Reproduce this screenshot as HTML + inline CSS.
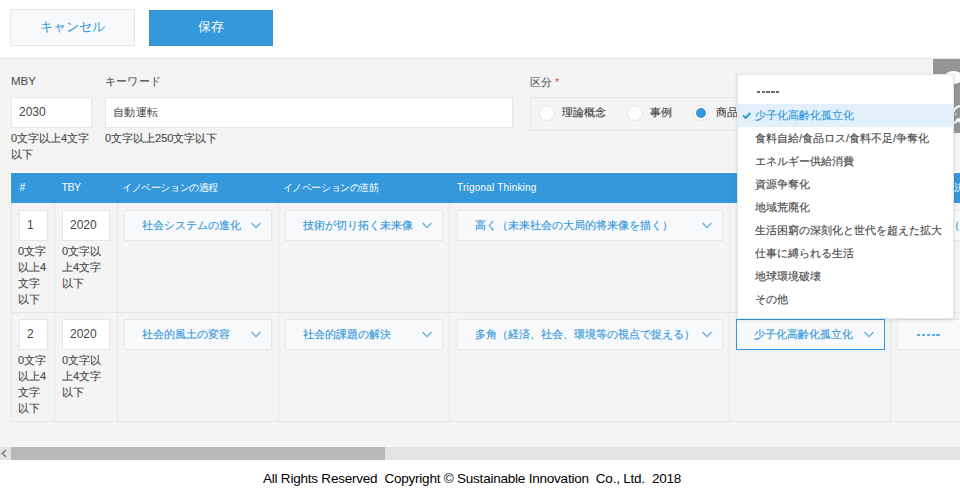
<!DOCTYPE html>
<html><head><meta charset="utf-8">
<style>
*{box-sizing:border-box;margin:0;padding:0}
html,body{width:960px;height:495px;overflow:hidden;background:#fff;font-family:"Liberation Sans",sans-serif;color:#333}
.dd,.sel,.help,.rl{-webkit-text-stroke:0.15px currentColor}
.abs{position:absolute}
.btn{position:absolute;top:9px;height:37px;font-size:12.5px;text-align:center;line-height:35px}
.cancel{left:10px;width:125px;background:#f7f9fa;border:1px solid #e3e7e8;color:#3498db}
.save{left:149px;width:123.5px;top:10px;height:35.5px;line-height:33.5px;background:#3498db;border:1px solid #3192d6;color:#fff}
.grey{position:absolute;left:0;top:58px;width:960px;height:389px;background:#f4f4f4;border-top:1px solid #e3e7e8}
.lbl{position:absolute;font-size:11px;color:#4a4a4a}
.inp{position:absolute;background:#fff;border:1px solid #e3e7e8;font-size:12px;color:#444;padding-left:7px}
.help{position:absolute;font-size:11px;line-height:16px;color:#4a4a4a}
.thead{position:absolute;left:11px;top:173px;width:949px;height:30px;background:#3498db;box-shadow:-1px -1px 0 #fff;color:#fff;font-size:9.5px;line-height:30px}
.thead span{position:absolute;top:0;white-space:nowrap}
.vl{position:absolute;top:203px;height:219px;width:1px;background:#e3e7e8}
.hl{position:absolute;left:11px;width:949px;height:1px;background:#e3e7e8}
.sel{position:absolute;height:31px;background:#f7f9fa;border:1px solid #e3e7e8;color:#3498db;font-size:11px;line-height:29px;padding-left:17px;white-space:nowrap;overflow:hidden}
.sel svg{position:absolute;right:10px;top:11px}
.dd{position:absolute;left:737px;top:74px;width:217px;height:245px;background:#fff;border:1px solid #e3e7e8;box-shadow:0 1px 4px rgba(0,0,0,.12);font-size:11px;color:#4a4a4a}
.dd div{position:absolute;left:0;width:215px;height:23px;line-height:23px;padding-left:17px;white-space:nowrap}
.dd .on{background:#e1f0fb;color:#3498db}
.radio{position:absolute;top:105px;width:16px;height:16px;border-radius:50%;background:#fff;border:1px solid #e6e6e6}
.rl{position:absolute;top:104px;font-size:11px;line-height:16px;color:#444}
.foot{position:absolute;left:263px;top:470.5px;white-space:nowrap;font-size:13.5px;letter-spacing:-0.22px;color:#000}
</style></head><body>
<div class="btn cancel">キャンセル</div>
<div class="btn save">保存</div>
<div class="grey"></div>

<div class="lbl" style="left:11px;top:74.5px;font-size:11.5px">MBY</div>
<div class="lbl" style="left:104.5px;top:74px;font-size:11px;letter-spacing:0.35px">キーワード</div>
<div class="lbl" style="left:530px;top:75px">区分 <span style="color:#e74c3c">*</span></div>

<div class="inp" style="left:11px;top:97px;width:81px;height:31px;line-height:29px">2030</div>
<div class="inp" style="left:105px;top:97px;width:408px;height:31px;line-height:29px"><span style="font-size:11px;letter-spacing:0.3px">自動運転</span></div>
<div class="help" style="left:11px;top:130px">0文字以上4文字<br>以下</div>
<div class="help" style="left:105px;top:130px">0文字以上250文字以下</div>

<div class="abs" style="left:530px;top:97px;width:260px;height:34px;border:1px solid #e3e7e8;background:#f4f4f4"></div>
<div class="radio" style="left:539px"></div><div class="rl" style="left:562px">理論概念</div>
<div class="radio" style="left:627px"></div><div class="rl" style="left:650px">事例</div>
<div class="radio" style="left:693px"><div style="position:absolute;left:2px;top:2px;width:10px;height:10px;border-radius:50%;background:#3498db"></div></div><div class="rl" style="left:716px">商品</div>

<div class="abs" style="left:932px;top:59px;width:28px;height:74px;background:#959595;border-left:1px solid #fff"></div>
<div class="abs" style="left:944px;top:71px;width:19px;height:13px;border-radius:50%;background:#fff"></div>
<svg class="abs" style="left:933px;top:98px" width="27" height="32" viewBox="0 0 27 32"><path d="M20.5 14 Q22 9 27 8" fill="none" stroke="#fff" stroke-width="2"/><path d="M22 17 L23 15.5" fill="none" stroke="#fff" stroke-width="1.2"/><path d="M21 25.5 L26 21" fill="none" stroke="#fff" stroke-width="2"/><path d="M22.5 21 L27 20 L27 25 Z" fill="#fff"/></svg>

<div class="thead">
<span style="left:8.5px;top:-1px;font-size:10.5px">#</span>
<span style="left:50.5px;top:-1px;font-size:10.5px;letter-spacing:-0.4px">TBY</span>
<span style="left:111px;letter-spacing:-0.4px">イノベーションの過程</span>
<span style="left:271.5px;letter-spacing:-0.4px">イノベーションの道筋</span>
<span style="left:446px;font-size:10px;letter-spacing:0.2px">Trigonal Thinking</span>
<span style="left:942.5px">決</span>
</div>

<div class="vl" style="left:11px"></div>
<div class="vl" style="left:54px"></div>
<div class="vl" style="left:117px"></div>
<div class="vl" style="left:278px"></div>
<div class="vl" style="left:449px"></div>
<div class="vl" style="left:729px"></div>
<div class="vl" style="left:890px"></div>
<div class="hl" style="top:312px"></div>
<div class="hl" style="top:421px"></div>

<!-- row 1 -->
<div class="inp" style="left:19px;top:210px;width:29px;height:31px;line-height:29px;padding-left:7px">1</div>
<div class="inp" style="left:62px;top:210px;width:48px;height:31px;line-height:29px;padding-left:7px">2020</div>
<div class="help" style="left:18px;top:243px">0文字<br>以上4<br>文字<br>以下</div>
<div class="help" style="left:62px;top:243px">0文字以<br>上4文字<br>以下</div>
<div class="sel" style="left:124px;top:210px;width:148px">社会システムの進化<svg width="10" height="7" viewBox="0 0 10 7"><path d="M0.6 1L5 5.6L9.4 1" fill="none" stroke="#5aaae2" stroke-width="1.2"/></svg></div>
<div class="sel" style="left:285px;top:210px;width:158px">技術が切り拓く未来像<svg width="10" height="7" viewBox="0 0 10 7"><path d="M0.6 1L5 5.6L9.4 1" fill="none" stroke="#5aaae2" stroke-width="1.2"/></svg></div>
<div class="sel" style="left:457px;top:210px;width:266px">高く（未来社会の大局的将来像を描く）<svg width="10" height="7" viewBox="0 0 10 7"><path d="M0.6 1L5 5.6L9.4 1" fill="none" stroke="#5aaae2" stroke-width="1.2"/></svg></div>
<div class="sel" style="left:897px;top:210px;width:148px;padding-left:29px">高く（未来</div>

<!-- row 2 -->
<div class="inp" style="left:19px;top:319px;width:29px;height:31px;line-height:29px;padding-left:7px">2</div>
<div class="inp" style="left:62px;top:319px;width:48px;height:31px;line-height:29px;padding-left:7px">2020</div>
<div class="help" style="left:18px;top:352px">0文字<br>以上4<br>文字<br>以下</div>
<div class="help" style="left:62px;top:352px">0文字以<br>上4文字<br>以下</div>
<div class="sel" style="left:124px;top:319px;width:148px">社会的風土の変容<svg width="10" height="7" viewBox="0 0 10 7"><path d="M0.6 1L5 5.6L9.4 1" fill="none" stroke="#5aaae2" stroke-width="1.2"/></svg></div>
<div class="sel" style="left:285px;top:319px;width:158px">社会的課題の解決<svg width="10" height="7" viewBox="0 0 10 7"><path d="M0.6 1L5 5.6L9.4 1" fill="none" stroke="#5aaae2" stroke-width="1.2"/></svg></div>
<div class="sel" style="left:457px;top:319px;width:266px">多角（経済、社会、環境等の視点で捉える）<svg width="10" height="7" viewBox="0 0 10 7"><path d="M0.6 1L5 5.6L9.4 1" fill="none" stroke="#5aaae2" stroke-width="1.2"/></svg></div>
<div class="sel" style="left:736px;top:319px;width:149px;border-color:#3498db">少子化高齢化孤立化<svg width="10" height="7" viewBox="0 0 10 7"><path d="M0.6 1L5 5.6L9.4 1" fill="none" stroke="#5aaae2" stroke-width="1.2"/></svg></div>
<div class="sel" style="left:897px;top:319px;width:148px"></div>
<div class="abs" style="left:917px;top:334px;width:23.5px;height:2px;background:repeating-linear-gradient(to right,#62ade2 0 3.5px,transparent 3.5px 4.85px)"></div>

<div class="abs" style="left:0;top:447px;width:960px;height:13px;background:#e3e3e3"></div>
<div class="abs" style="left:11px;top:447px;width:374px;height:13px;background:#b8b8b8"></div>
<svg class="abs" style="left:1px;top:449px" width="7" height="9" viewBox="0 0 7 9"><path d="M5 1L1.2 4.4L5 7.8" fill="none" stroke="#6f6f6f" stroke-width="1.3"/></svg>

<div class="dd">
<div style="top:5px"></div>
<div class="on" style="top:29px">少子化高齢化孤立化</div>
<div style="top:52px">食料自給/食品ロス/食料不足/争奪化</div>
<div style="top:75px">エネルギー供給消費</div>
<div style="top:98px">資源争奪化</div>
<div style="top:121px">地域荒廃化</div>
<div style="top:144px">生活困窮の深刻化と世代を超えた拡大</div>
<div style="top:167px">仕事に縛られる生活</div>
<div style="top:190px">地球環境破壊</div>
<div style="top:213px">その他</div>
</div>
<div class="abs" style="left:757px;top:91px;width:23px;height:2px;background:repeating-linear-gradient(to right,#6a6a6a 0 3.3px,transparent 3.3px 4.75px)"></div>
<svg class="abs" style="left:742px;top:110px" width="10" height="9" viewBox="0 0 10 9"><path d="M1 5.4L3.6 8L8.4 3" fill="none" stroke="#3498db" stroke-width="2"/></svg>

<div class="foot">All Rights Reserved&nbsp; Copyright © Sustainable Innovation&nbsp; Co., Ltd.&nbsp; 2018</div>
</body></html>
